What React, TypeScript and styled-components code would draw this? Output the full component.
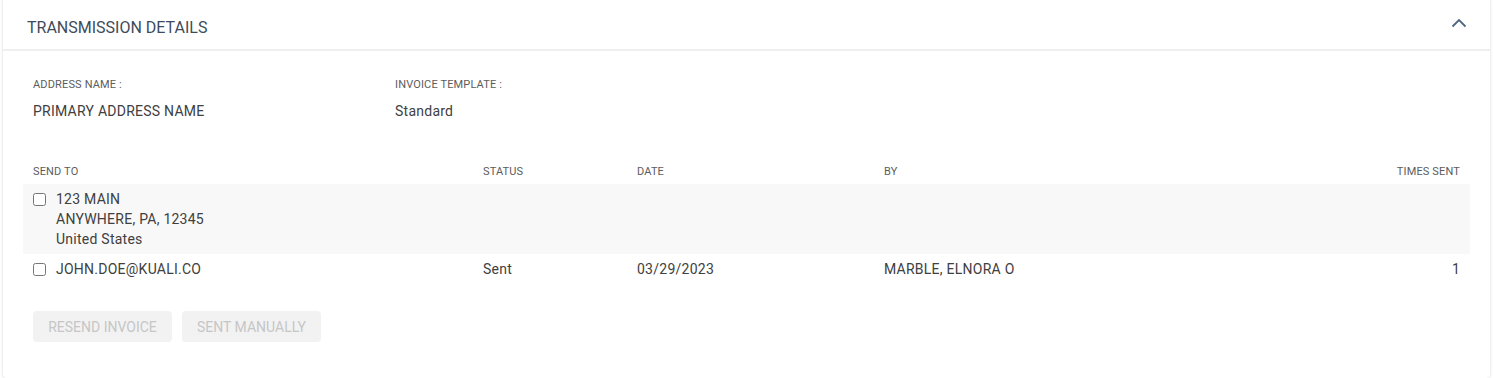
import React from 'react';
import styled, { createGlobalStyle } from 'styled-components';

const GlobalStyle = createGlobalStyle`
  html, body { margin: 0; padding: 0; background: #fff; }
  body { font-family: Roboto, 'Liberation Sans', sans-serif; }
`;

const Card = styled.section`
  margin: 0 3px;
  background: #fff;
  border-radius: 0 0 4px 4px;
  box-shadow: 0 0 3px rgba(0, 0, 0, 0.18);
  min-height: 378px;
`;

const CardHeader = styled.header`
  height: 49px;
  display: flex;
  align-items: center;
  justify-content: space-between;
  padding: 0 23px 0 24px;
  border-bottom: 2px solid #efefef;
`;

const Title = styled.h2`
  margin: 6px 0 0;
  font-size: 16px;
  font-weight: 400;
  color: #3e4b5b;
`;

const ToggleButton = styled.button`
  border: 0;
  background: none;
  padding: 0;
  display: flex;
  cursor: pointer;
  margin-top: -4px;
`;

const Body = styled.div`
  padding: 27px 20px 0;
`;

const InfoGrid = styled.div`
  display: grid;
  grid-template-columns: 362px 1fr;
  padding-left: 10px;
`;

const Field = styled.div`
  display: flex;
  flex-direction: column;
`;

const Label = styled.span<{ $right?: boolean }>`
  font-size: 11px;
  line-height: 14px;
  letter-spacing: 0.15px;
  color: #5c5c5c;
  text-transform: uppercase;
  text-align: ${({ $right }) => ($right ? 'right' : 'left')};
`;

const Value = styled.span`
  margin-top: 9px;
  font-size: 14px;
  line-height: 20px;
  letter-spacing: 0.25px;
  color: #404040;
`;

const Table = styled.div`
  margin-top: 44px;
`;

const Row = styled.div<{ $shaded?: boolean; $head?: boolean }>`
  display: grid;
  grid-template-columns: 450px 154px 247px 1fr auto;
  align-items: start;
  background: ${({ $shaded }) => ($shaded ? '#f8f8f8' : 'transparent')};
  padding: ${({ $head }) => ($head ? '0 10px 5px' : '5px 10px')};
`;

const Cell = styled.div<{ $right?: boolean }>`
  font-size: 14px;
  line-height: 20px;
  letter-spacing: 0.25px;
  color: #404040;
  text-align: ${({ $right }) => ($right ? 'right' : 'left')};
`;

const SendTo = styled.label`
  display: flex;
  align-items: flex-start;
  gap: 10px;
  font-size: 14px;
  line-height: 20px;
  letter-spacing: 0.25px;
  color: #404040;
`;

const Check = styled.input.attrs({ type: 'checkbox' })`
  margin: 4px 0 0;
  width: 13px;
  height: 13px;
  flex: none;
`;

const Actions = styled.div`
  display: flex;
  gap: 10px;
  padding: 27px 10px 0;
`;

const Button = styled.button`
  height: 31px;
  width: 139px;
  border: 0;
  border-radius: 4px;
  background: #f2f2f2;
  color: #c6c6c6;
  font-family: Roboto, 'Liberation Sans', sans-serif;
  font-size: 14px;
  text-transform: uppercase;
  cursor: default;
`;

const rows = [
  {
    id: 'addr',
    lines: ['123 MAIN', 'ANYWHERE, PA, 12345', 'United States'],
    status: '',
    date: '',
    by: '',
    times: '',
  },
  {
    id: 'email',
    lines: ['JOHN.DOE@KUALI.CO'],
    status: 'Sent',
    date: '03/29/2023',
    by: 'MARBLE, ELNORA O',
    times: '1',
  },
];

export default function App() {
  return (
    <>
      <GlobalStyle />
      <Card>
        <CardHeader>
          <Title>TRANSMISSION DETAILS</Title>
          <ToggleButton aria-label="Collapse">
            <svg width="16" height="10" viewBox="0 0 16 10" fill="none">
              <path d="M1.5 8.5L8 2l6.5 6.5" stroke="#4d6580" strokeWidth="1.8" />
            </svg>
          </ToggleButton>
        </CardHeader>
        <Body>
          <InfoGrid>
            <Field>
              <Label>Address Name :</Label>
              <Value>PRIMARY ADDRESS NAME</Value>
            </Field>
            <Field>
              <Label>Invoice Template :</Label>
              <Value>Standard</Value>
            </Field>
          </InfoGrid>
          <Table>
            <Row $head>
              <Label>Send To</Label>
              <Label>Status</Label>
              <Label>Date</Label>
              <Label>By</Label>
              <Label $right>Times Sent</Label>
            </Row>
            {rows.map((r, i) => (
              <Row key={r.id} $shaded={i % 2 === 0}>
                <SendTo>
                  <Check />
                  <span>
                    {r.lines.map((l) => (
                      <div key={l}>{l}</div>
                    ))}
                  </span>
                </SendTo>
                <Cell>{r.status}</Cell>
                <Cell>{r.date}</Cell>
                <Cell>{r.by}</Cell>
                <Cell $right>{r.times}</Cell>
              </Row>
            ))}
          </Table>
          <Actions>
            <Button disabled>Resend Invoice</Button>
            <Button disabled>Sent Manually</Button>
          </Actions>
        </Body>
      </Card>
    </>
  );
}
